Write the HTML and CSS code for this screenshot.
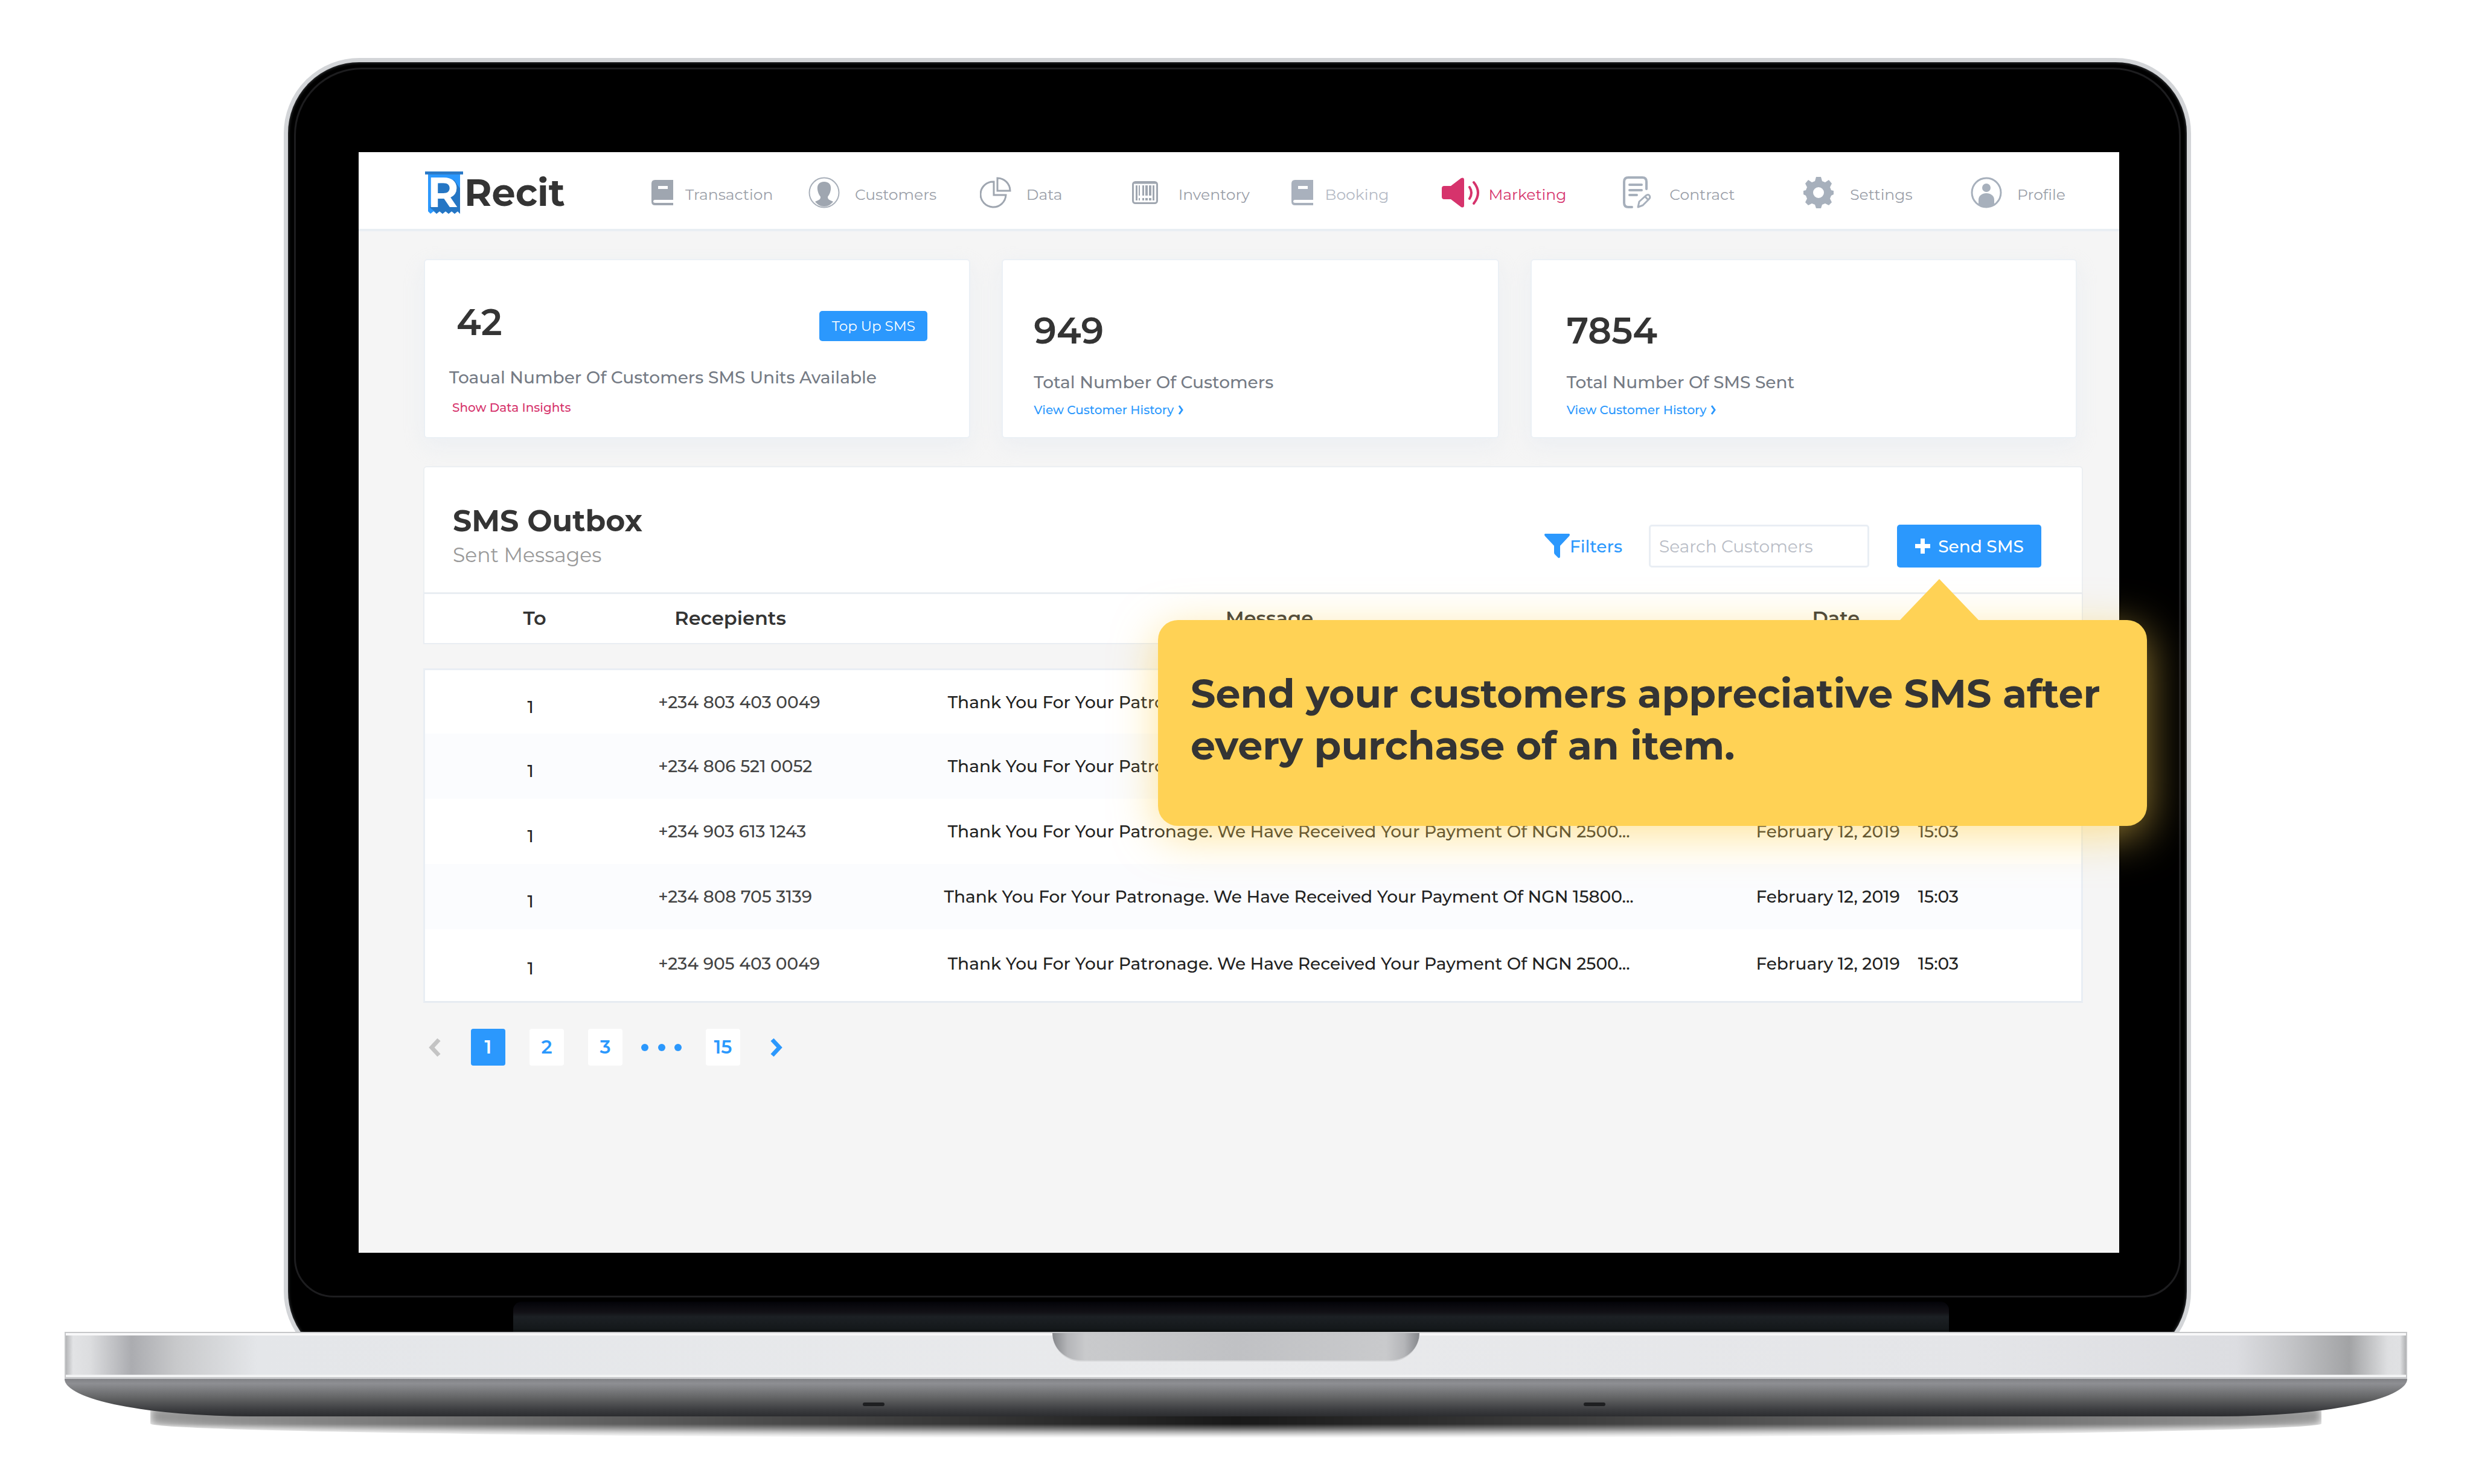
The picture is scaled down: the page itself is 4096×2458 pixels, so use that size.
FILE: index.html
```html
<!DOCTYPE html>
<html lang="en">
<head>
<meta charset="utf-8">
<title>Recit – SMS Outbox</title>
<link rel="stylesheet" href="styles.css">
</head>
<body>
<div class="laptop">
  <div class="lid-clip">
    <div class="lid">
      <div class="bezel">
        <div class="screen">
          <header class="topbar">
            <a class="brand" href="#">
              <svg class="brand-mark" viewBox="0 0 63 71" aria-hidden="true">
                <path fill="#2b98fd" d="M5 3h53v67l-4-4-5 4-5-4-5 4-5-4-5 4-5-4-5 4-5-4-5 4-4-4z"/>
                <path fill="#2576c4" d="M22 20l26-6 10 14v42l-4-4-5 4-5-4-5 4-5-4-5 4-5-4-5 4-3-4-8-6z"/>
                <path fill="#2b7ac8" d="M0 0h63v5H0z"/>
                <text class="brand-letter" x="4" y="59">R</text>
              </svg>
              <span>Recit</span>
            </a>
            <nav class="nav">
              <a class="nav-item compact" href="#">
                <svg class="icon" width="36" height="42" viewBox="0 0 36 42"><path fill="#9fa6b0" fill-rule="evenodd" d="M6 0h30v33H6q-3 0-3 2.500t3 2.500h30v4H6q-6 0-6-6V6q0-6 6-6zM11 10v5h16v-5z"/></svg>
                <span>Transaction</span></a>
              <a class="nav-item" href="#">
                <svg class="icon" width="52" height="52" viewBox="0 0 52 52"><circle cx="26" cy="26" r="24.500" fill="none" stroke="#a9b0ba" stroke-width="2"/><path fill="#9fa6b0" d="M26 8c8 0 12 5 11 13-1 6-3 9-5 12 0 5 3 5 9 8-4 5-9 8-15 8s-11-3-15-8c6-3 9-3 9-8-2-3-4-6-5-12-1-8 3-13 11-13z"/></svg>
                <span>Customers</span></a>
              <a class="nav-item" href="#">
                <svg class="icon" width="52" height="52" viewBox="0 0 52 52" fill="none" stroke="#9fa6b0" stroke-width="3"><path d="M23 8a21 21 0 1 0 20 22H23z"/><path d="M29 2v21h21A21 21 0 0 0 29 2z"/></svg>
                <span>Data</span></a>
              <a class="nav-item" href="#">
                <svg class="icon" width="43" height="38" viewBox="0 0 43 38"><rect x="1.500" y="1.500" width="40" height="35" rx="4" fill="none" stroke="#9fa6b0" stroke-width="3"/><path d="M3 3h37" stroke="#9fa6b0" stroke-width="3"/><path fill="#9fa6b0" d="M6 7h3v25H6zM11 7h2v17h-2zM17 7h3v17h-3zM22 7h4v17h-4zM28 7h4v17h-4zM34 7h3v25h-3zM11 28h2v4h-2zM17 28h3v4h-3zM22 28h4v4h-4zM28 28h4v4h-4z"/></svg>
                <span>Inventory</span></a>
              <a class="nav-item compact pale" href="#">
                <svg class="icon" width="36" height="42" viewBox="0 0 36 42"><path fill="#a9b1bd" fill-rule="evenodd" d="M6 0h30v33H6q-3 0-3 2.500t3 2.500h30v4H6q-6 0-6-6V6q0-6 6-6zM11 10v5h16v-5z"/></svg>
                <span>Booking</span></a>
              <a class="nav-item active" href="#" aria-current="page">
                <svg class="icon" width="65" height="50" viewBox="0 0 65 50"><path fill="#d6336c" d="M4 14h11L32 1q5-2 5 3v42q0 5-5 3L15 36H4q-4 0-4-4V18q0-4 4-4z"/><path fill="none" stroke="#d6336c" stroke-width="4" stroke-linecap="round" d="M46 16q6 9 0 19M53 8q14 17 0 35"/></svg>
                <span>Marketing</span></a>
              <a class="nav-item" href="#">
                <svg class="icon" width="47" height="54" viewBox="0 0 47 54" fill="none" stroke="#a7b0bc" stroke-width="4" stroke-linecap="round"><path d="M15 51H9q-7 0-7-7V9q0-7 7-7h23q7 0 7 7v12"/><path d="M11 14h20M11 23h20M11 31h12"/><path d="M25 51l2-9 11-10q4-3 6 0t-1 6L33 48zM37 34l5 5" stroke-width="3" stroke-linejoin="round"/></svg>
                <span>Contract</span></a>
              <a class="nav-item" href="#">
                <svg class="icon" width="50" height="52" viewBox="0 0 50 52"><path fill="#a7b0bc" fill-rule="evenodd" d="M21 0h8l2 7 5 2 6-4 5 6-3 6 2 5 4 1v6l-4 2-2 5 3 6-5 5-6-3-5 2-2 6h-8l-2-6-5-2-6 3-5-5 3-6-2-5-4-2v-6l4-1 2-5-3-6 5-6 6 4 5-2zM25 17a9 9 0 1 0 0 18 9 9 0 0 0 0-18z"/></svg>
                <span>Settings</span></a>
              <a class="nav-item" href="#">
                <svg class="icon" width="52" height="52" viewBox="0 0 52 52"><circle cx="26" cy="26" r="24" fill="none" stroke="#a7b0bc" stroke-width="3"/><circle cx="26" cy="18" r="7" fill="#a7b0bc"/><path fill="#a7b0bc" d="M13 45V38c0-7 6-11 13-11s13 4 13 11v7q-6 5-13 5t-13-5z"/></svg>
                <span>Profile</span></a>
            </nav>
          </header>

          <main class="content">
            <section class="cards">
              <article class="card units">
                <div class="units-row">
                  <p class="figure">42</p>
                  <button class="btn small" type="button">Top Up SMS</button>
                </div>
                <p class="caption">Toaual Number Of Customers SMS Units Available</p>
                <a class="more pink" href="#">Show Data Insights</a>
              </article>
              <article class="card">
                <p class="figure">949</p>
                <p class="caption">Total Number Of Customers</p>
                <a class="more" href="#">View Customer History <svg width="10" height="16" viewBox="0 0 10 16"><path d="M2 1l5 7-5 7" fill="none" stroke="#2b98fd" stroke-width="3"/></svg></a>
              </article>
              <article class="card wide-pad">
                <p class="figure">7854</p>
                <p class="caption">Total Number Of SMS Sent</p>
                <a class="more" href="#">View Customer History <svg width="10" height="16" viewBox="0 0 10 16"><path d="M2 1l5 7-5 7" fill="none" stroke="#2b98fd" stroke-width="3"/></svg></a>
              </article>
            </section>

            <section class="outbox">
              <div class="outbox-head">
                <div>
                  <h1>SMS Outbox</h1>
                  <p class="subtitle">Sent Messages</p>
                </div>
                <div class="actions">
                  <button class="filters" type="button"><svg width="42" height="41" viewBox="0 0 42 41"><path fill="#2b98fd" d="M1 0h40q2 1 0 4L26 20v17q0 4-3 3l-6-6q-1-1-1-3V20L1 4q-2-3 0-4z"/></svg>Filters</button>
                  <input class="search" type="search" placeholder="Search Customers" aria-label="Search Customers">
                  <div class="send">
                    <button class="btn" type="button"><svg width="27" height="27" viewBox="0 0 27 27"><path d="M13.500 1v25M1 13.500h25" stroke="#fff" stroke-width="7"/></svg>Send SMS</button>
                    <div class="callout" role="tooltip">Send your customers appreciative SMS after every purchase of an item.</div>
                  </div>
                </div>
              </div>
              <table class="messages">
                <colgroup><col class="c-to"><col class="c-phone"><col class="c-message"><col class="c-date"></colgroup>
                <thead><tr><th>To</th><th>Recepients</th><th class="h-message">Message</th><th class="h-date">Date</th></tr></thead>
                <tbody>
                  <tr><td class="to">1</td><td class="phone">+234 803 403 0049</td><td class="message">Thank You For Your Patronage. We Have Received Your Payment Of NGN 2500...</td><td><time>February 12, 2019</time><time>15:03</time></td></tr>
                  <tr><td class="to">1</td><td class="phone">+234 806 521 0052</td><td class="message">Thank You For Your Patronage. We Have Received Your Payment Of NGN 2500...</td><td><time>February 12, 2019</time><time>15:03</time></td></tr>
                  <tr><td class="to">1</td><td class="phone">+234 903 613 1243</td><td class="message">Thank You For Your Patronage. We Have Received Your Payment Of NGN 2500...</td><td><time>February 12, 2019</time><time>15:03</time></td></tr>
                  <tr><td class="to">1</td><td class="phone">+234 808 705 3139</td><td class="message">Thank You For Your Patronage. We Have Received Your Payment Of NGN 15800...</td><td><time>February 12, 2019</time><time>15:03</time></td></tr>
                  <tr><td class="to">1</td><td class="phone">+234 905 403 0049</td><td class="message">Thank You For Your Patronage. We Have Received Your Payment Of NGN 2500...</td><td><time>February 12, 2019</time><time>15:03</time></td></tr>
                </tbody>
              </table>
            </section>

            <nav class="pager" aria-label="Pages">
              <a class="arrow prev" href="#" aria-label="Previous"><svg width="22" height="32" viewBox="0 0 22 32"><path d="M18 3L6 16l12 13" fill="none" stroke="#c4c4c4" stroke-width="7"/></svg></a>
              <a class="page current" href="#">1</a>
              <a class="page" href="#">2</a>
              <a class="page" href="#">3</a>
              <svg class="dots" width="68" height="14" viewBox="0 0 68 14" fill="#2b98fd"><circle cx="7" cy="7" r="6"/><circle cx="35" cy="7" r="6"/><circle cx="62" cy="7" r="6"/></svg>
              <a class="page" href="#">15</a>
              <a class="arrow next" href="#" aria-label="Next"><svg width="22" height="32" viewBox="0 0 22 32"><path d="M4 3l12 13L4 29" fill="none" stroke="#2b98fd" stroke-width="7"/></svg></a>
            </nav>
          </main>
        </div>
      </div>
      <div class="hinge"></div>
    </div>
  </div>
  <div class="base">
    <div class="deck"><div class="notch"></div></div>
    <div class="underside"><span class="foot"></span><span class="foot"></span></div>
  </div>
  <div class="ground-shadow"></div>
</div>
</body>
</html>
```
FILE: styles.css
```css
* { box-sizing: border-box; }

body {
  margin: 0;
  background: #fff;
  color: #343434;
  font-family: Montserrat, Inter, "Liberation Sans", sans-serif;
  font-size: 28px;
  font-weight: 500;
}

h1, p { margin: 0; }
a { color: inherit; text-decoration: none; }
svg { display: block; flex: none; }
button { font: inherit; cursor: pointer; }

/* Laptop */
.laptop { padding: 96px 109px 0 107px; }

.lid-clip {
  overflow: hidden;
  margin: 0 358px 0 363px;
}

.lid {
  margin-bottom: -58px;
  padding: 9px 10px 51px;
  border: 7px solid #d3d5d8;
  border-radius: 125px;
  background: #000;
  box-shadow: inset 0 0 5px #55585c;
}

.bezel {
  padding: 137px 99px 71px 104px;
  border: 3px solid #1d1d1f;
  border-radius: 112px 112px 65px 65px;
}

.hinge {
  height: 50px;
  margin: 7px 384px 0 363px;
  border-radius: 14px 14px 0 0;
  background: linear-gradient(#030308, #121116 35%, #1c2024 50%, #14181a 90%, #0c0f10);
}

.base { position: relative; z-index: 1; }

.deck {
  height: 78px;
  border: solid #c6c7c9;
  border-width: 2px 2px 3px;
  background: linear-gradient(to right,
    #b4b5b7, #e2e3e5 12px, #dcdddf 40px, #abacb0 109px, #c8c9cb 184px, #e4e6e9 317px,
    #e9eaec 50%, #e4e5e8 calc(100% - 713px), #dcdde1 calc(100% - 281px),
    #c6c7ca calc(100% - 200px), #a2a3a5 calc(100% - 94px), #dedfe1 calc(100% - 30px), #e0e1e3 calc(100% - 10px), #b0b1b3);
  box-shadow: inset 0 4px 0 #f8f8f9, inset 0 -4px 0 #f2f3f4;
}

.notch {
  width: 608px;
  height: 47px;
  margin: 0 auto;
  border-bottom: 2px solid #d4d5d7;
  border-radius: 0 0 50px 50px;
  background: linear-gradient(to right, #85878b, #b4b5b8 25px, #c9cacc 55px, #c0c1c4 50%, #c9cacc calc(100% - 55px), #b4b5b8 calc(100% - 25px), #85878b);
}

.underside {
  display: flex;
  justify-content: space-between;
  align-items: flex-end;
  height: 62px;
  padding: 0 1328px 17px 1322px;
  border-radius: 0 0 310px 310px / 0 0 62px 62px;
  background: linear-gradient(#808185, #8e8f93 12%, #636465 50%, #3c3d40 82%, #2b2c2f);
}

.foot {
  width: 36px;
  height: 6px;
  border-radius: 3px;
  background: #1e1f21;
}

.ground-shadow {
  height: 52px;
  margin: -16px 142px 0;
  border-radius: 0 0 50% 50% / 0 0 24px 24px;
  background: linear-gradient(to right, rgba(0,0,0,.4), rgba(0,0,0,.7) 28%, rgba(0,0,0,.9) 50%, rgba(0,0,0,.7) 72%, rgba(0,0,0,.4));
  -webkit-mask-image: linear-gradient(#000 55%, rgba(0,0,0,.4) 80%, transparent);
  mask-image: linear-gradient(#000 55%, rgba(0,0,0,.4) 80%, transparent);
  filter: blur(7px);
}

/* Screen */
.screen {
  aspect-ratio: 16 / 10;
  background: #f5f5f5;
}

.topbar {
  display: flex;
  align-items: center;
  height: 131px;
  padding: 7px 20px 0 110px;
  border-bottom: 4px solid #e9eef3;
  background: #fff;
}

.brand {
  display: flex;
  align-items: center;
  gap: 2px;
  width: 375px;
  flex: none;
  font-size: 62px;
  font-weight: 700;
  line-height: 72px;
}
.brand-mark { width: 63px; height: 71px; overflow: visible; }
.brand-letter { fill: #fff; font-size: 70px; font-weight: 700; }

.nav {
  display: grid;
  flex: 1;
  grid-template-columns: 260fr 284fr 252fr 264fr 250fr 300fr 299fr 277fr 226fr;
  color: #9b9fa9;
  font-size: 25px;
}
.nav-item {
  display: grid;
  grid-template-columns: 77px auto;
  align-items: center;
  justify-content: start;
  font-weight: 400;
}
.nav-item span { padding-top: 5px; }
.nav-item.compact { grid-template-columns: 56px auto; }
.nav-item.pale { color: #b4bac5; }
.nav-item.active { color: #d6336c; }

.content { padding: 46px 60px 0 107px; }

.cards {
  display: grid;
  grid-template-columns: 905fr 823fr 905fr;
  gap: 52px;
  margin: 0 10px 46px 1px;
}

.card {
  height: 297px;
  padding: 82px 52px 0 51px;
  border: 2px solid #ebf0f5;
  border-radius: 6px;
  background: #fff;
  box-shadow: 0 12px 36px rgba(214, 226, 240, .3);
}
.card.wide-pad { padding-left: 58px; }
.card.units { padding: 68px 69px 0 40px; }

.units-row {
  display: flex;
  align-items: center;
  justify-content: space-between;
  padding-left: 12px;
}

.figure {
  font-size: 60px;
  font-weight: 600;
  line-height: 70px;
}
.caption {
  margin-top: 30px;
  color: #757b85;
  line-height: 40px;
}
.more {
  display: flex;
  align-items: center;
  gap: 7px;
  margin-top: 12px;
  color: #2b98fd;
  font-size: 20px;
  line-height: 28px;
}
.units .caption { margin-top: 36px; }
.units .more { margin-top: 16px; padding-left: 5px; }
.more.pink { color: #d6336c; }

.btn {
  display: flex;
  align-items: center;
  justify-content: center;
  gap: 12px;
  width: 239px;
  height: 71px;
  padding: 0;
  border: 0;
  border-radius: 5px;
  background: #2b98fd;
  color: #fff;
  font-size: 28px;
}
.btn.small {
  width: 179px;
  height: 50px;
  margin-top: 12px;
  font-size: 23px;
  font-weight: 400;
}

/* Outbox */
.outbox-head {
  display: flex;
  justify-content: space-between;
  height: 209px;
  padding: 59px 67px 0 47px;
  border: solid #eceff2;
  border-width: 2px 2px 0;
  border-radius: 6px 6px 0 0;
  background: #fff;
}
h1 {
  font-size: 49px;
  font-weight: 700;
  line-height: 60px;
}
.subtitle {
  margin-top: 4px;
  color: #9a9a9a;
  font-size: 33px;
  font-weight: 400;
  line-height: 44px;
}
.actions {
  display: flex;
  align-items: center;
  height: 71px;
  margin-top: 36px;
}
.filters {
  display: flex;
  align-items: center;
  margin-right: 44px;
  padding: 0;
  border: 0;
  background: none;
  color: #2b98fd;
  font-size: 28px;
}
.search {
  width: 365px;
  height: 71px;
  margin-right: 46px;
  padding: 0 14px;
  border: 3px solid #e9eef4;
  border-radius: 5px;
  background: #fff;
  font: inherit;
  font-weight: 400;
}
.search::placeholder { color: #b9bdc6; opacity: 1; }

.send { position: relative; }
.callout {
  position: absolute;
  z-index: 2;
  top: 158px;
  right: -175px;
  width: 1638px;
  height: 341px;
  padding: 79px 40px 79px 54px;
  border-radius: 33px;
  background: #ffd255;
  box-shadow: 0 16px 72px rgba(255, 210, 85, .6);
  font-size: 65px;
  font-weight: 700;
  line-height: 86px;
}
.callout::before {
  content: "";
  position: absolute;
  bottom: 100%;
  right: 279px;
  border: solid transparent;
  border-width: 0 65px 68px;
  border-bottom-color: #ffd255;
}

.messages {
  width: 100%;
  border-collapse: separate;
  border-spacing: 0;
  table-layout: fixed;
}
.c-to { width: 13%; }
.c-phone { width: 11%; }
.c-message { width: 56.3%; }
.c-date { width: 19.7%; }

th {
  height: 86px;
  padding: 0 0 3px;
  border: solid #e9edf2;
  border-width: 3px 0 2px;
  background: #fff;
  font-size: 32px;
  font-weight: 600;
}
.h-message { padding-right: 64px; }
.h-date { padding-left: 93px; text-align: left; }
th:first-child { border-left-width: 2px; padding-left: 10px; }
th:last-child { border-right-width: 2px; }

tbody::before {
  content: "";
  display: block;
  height: 40px;
}
td {
  height: 108px;
  padding: 0;
  background: #fff;
  color: #222;
  white-space: nowrap;
}
tbody tr:nth-child(even) td { background: #fbfcfe; }
tbody tr:first-child td { border-top: 3px solid #e9eef4; }
tbody tr:last-child td { height: 122px; padding-bottom: 5px; border-bottom: 3px solid #e6ebf1; }
td:first-child { border-left: 3px solid #e9eef4; }
td:last-child { border-right: 3px solid #e9eef4; }
td.to { padding: 16px 5px 0 0; text-align: center; }
.phone { padding-left: 32px; color: #444; }
.message { text-align: center; }
time + time { margin-left: 30px; }

.pager {
  display: flex;
  align-items: center;
  gap: 40px;
  margin: 43px 0 0 8px;
  color: #2b98fd;
  font-size: 31px;
  font-weight: 600;
}
.page {
  width: 57px;
  border-radius: 4px;
  background: #fff;
  line-height: 61px;
  text-align: center;
}
.page.current { background: #2b98fd; color: #fff; }
.arrow.prev { margin-right: 9px; }
.arrow.next { margin-left: 9px; }
.dots { margin-left: -10px; }
```
